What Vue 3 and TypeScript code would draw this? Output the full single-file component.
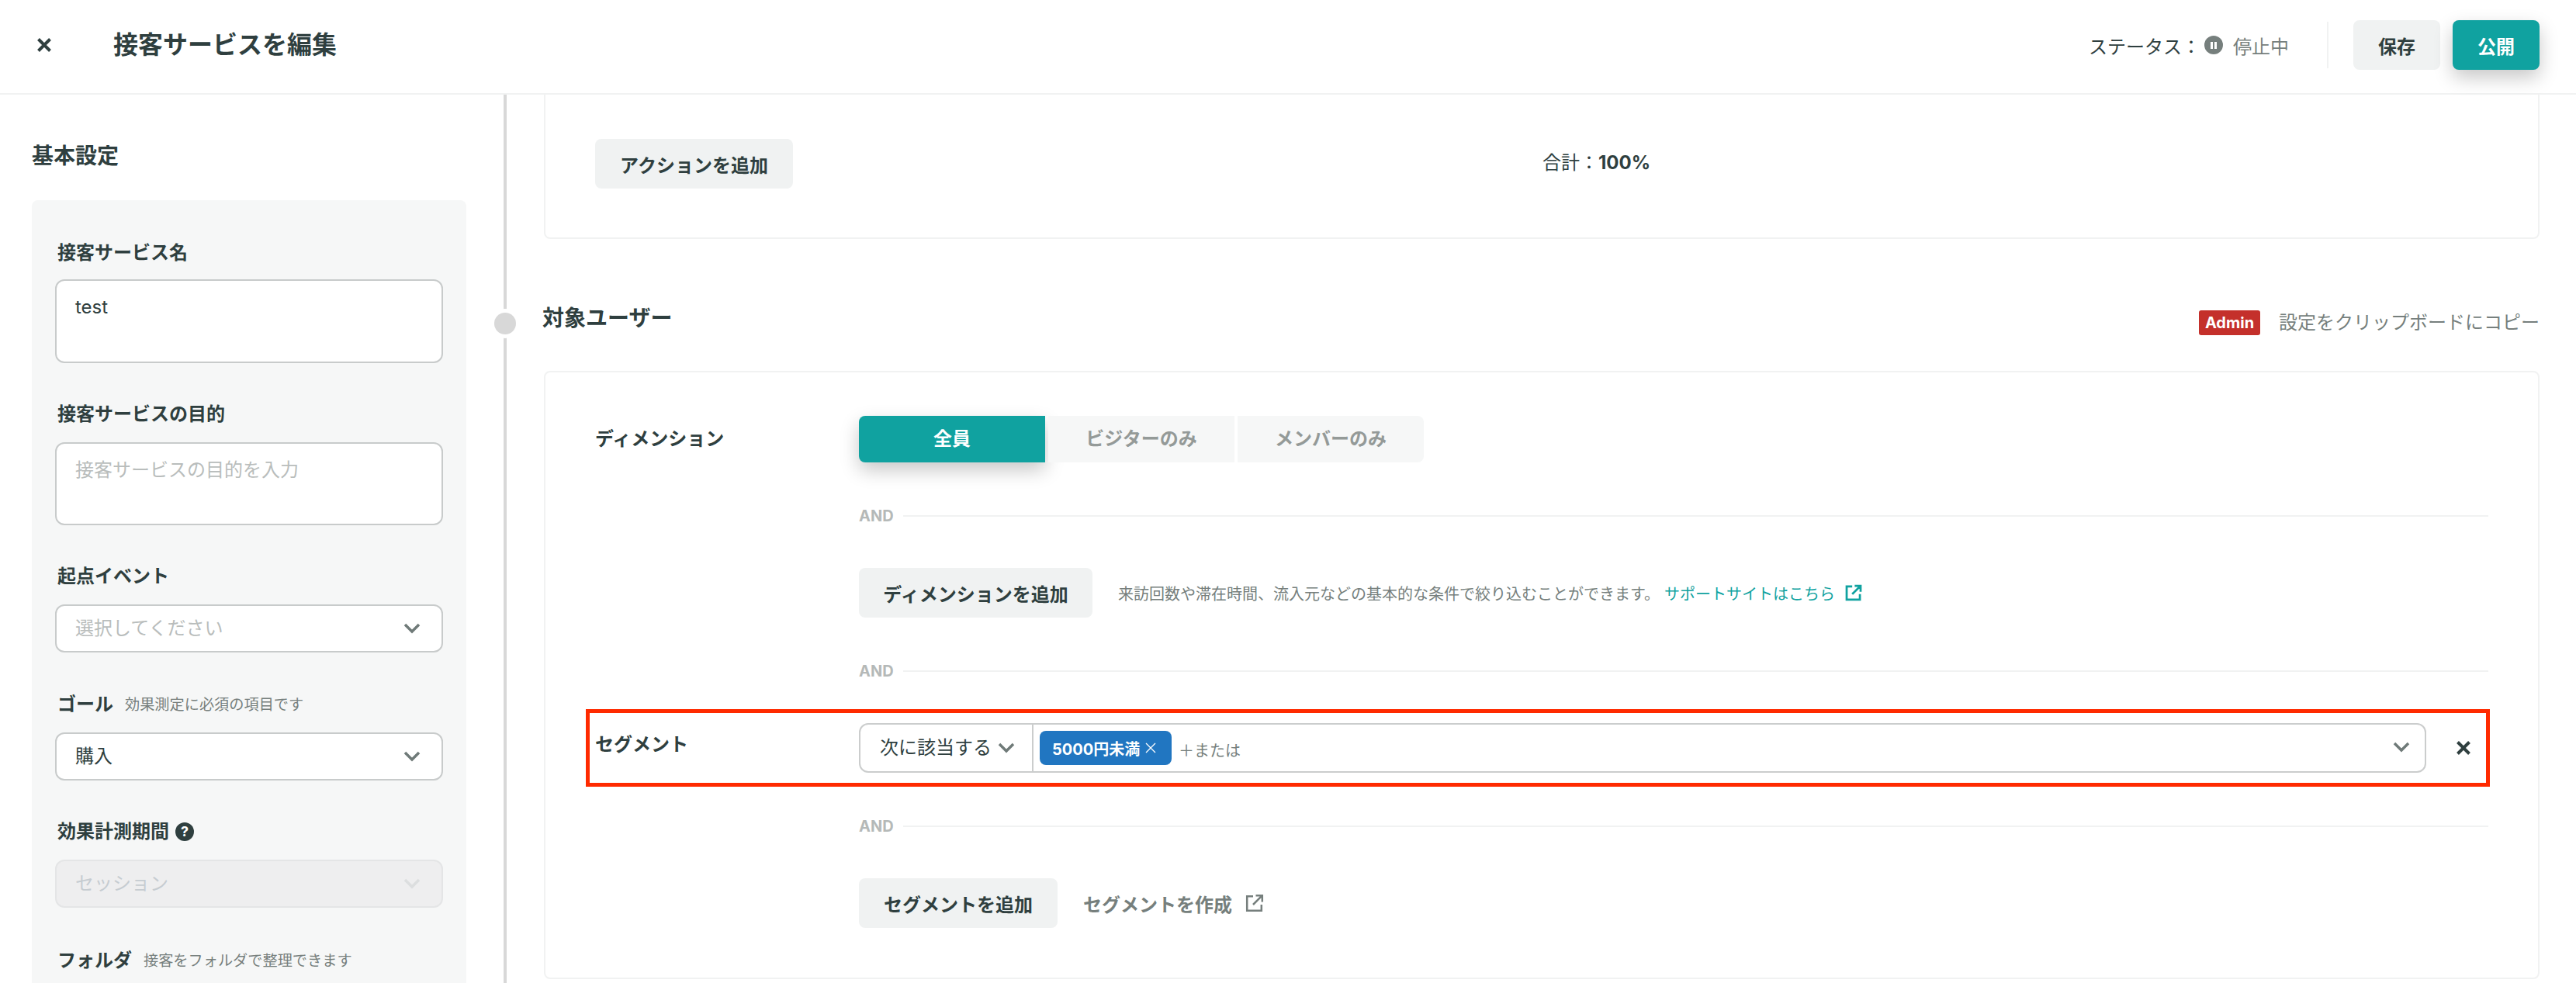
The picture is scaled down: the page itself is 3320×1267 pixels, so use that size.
<script setup lang="ts">
const tabs: { label: string; active?: boolean }[] = [
  { label: '全員', active: true },
  { label: 'ビジターのみ' },
  { label: 'メンバーのみ' },
]
</script>

<template>
  <div class="page">
    <header class="header">
      <svg class="close-top" viewBox="0 0 18 18"><path d="M1.500 1.500l15 15M16.500 1.500l-15 15" /></svg>
      <h1 class="page-title">接客サービスを編集</h1>
      <div class="header-right">
        <span class="status-label">ステータス：</span>
        <span class="pause"><i></i><i></i></span>
        <span class="status-value">停止中</span>
        <span class="header-divider"></span>
        <button class="btn save">保存</button>
        <button class="btn publish">公開</button>
      </div>
    </header>

    <div class="body">
      <aside class="sidebar">
        <h2 class="side-title">基本設定</h2>
        <div class="panel">
          <div class="field">
            <div class="label">接客サービス名</div>
            <div class="control area">test</div>
          </div>
          <div class="field">
            <div class="label">接客サービスの目的</div>
            <div class="control area placeholder">接客サービスの目的を入力</div>
          </div>
          <div class="field">
            <div class="label">起点イベント</div>
            <div class="control select placeholder">
              選択してください
              <svg class="chev" viewBox="0 0 22 14"><path d="M2 2l9 9 9-9" /></svg>
            </div>
          </div>
          <div class="field">
            <div class="label">ゴール<span class="sub">効果測定に必須の項目です</span></div>
            <div class="control select">
              購入
              <svg class="chev" viewBox="0 0 22 14"><path d="M2 2l9 9 9-9" /></svg>
            </div>
          </div>
          <div class="field">
            <div class="label">効果計測期間<span class="help">?</span></div>
            <div class="control select disabled">
              セッション
              <svg class="chev" viewBox="0 0 22 14"><path d="M2 2l9 9 9-9" /></svg>
            </div>
          </div>
          <div class="field">
            <div class="label">フォルダ<span class="sub">接客をフォルダで整理できます</span></div>
            <div class="control select"></div>
          </div>
        </div>
      </aside>

      <main class="main">
        <section class="card top-card">
          <button class="btn add action-btn">アクションを追加</button>
          <div class="total">合計：<b>100%</b></div>
        </section>

        <div class="section-head">
          <span class="dot"></span>
          <h2 class="section-title">対象ユーザー</h2>
          <div class="copy">
            <span class="admin">Admin</span>
            <span>設定をクリップボードにコピー</span>
          </div>
        </div>

        <section class="card target-card">
          <div class="row">
            <div class="row-label">ディメンション</div>
            <div class="tabs">
              <div v-for="t in tabs" :key="t.label" class="tab" :class="{ active: t.active }">{{ t.label }}</div>
            </div>
          </div>

          <div class="and and-1"><span>AND</span></div>

          <div class="row add-row">
            <button class="btn add dim-btn">ディメンションを追加</button>
            <span class="hint">来訪回数や滞在時間、流入元などの基本的な条件で絞り込むことができます。</span>
            <a class="link">サポートサイトはこちら
              <svg class="ext ext-small" viewBox="0 0 24 24"><path d="M10 3.200H2.200v18.600h18.600V14M13.500 2.200h8.300v8.300M21.800 2.200L10 14" /></svg>
            </a>
          </div>

          <div class="and and-2"><span>AND</span></div>

          <div class="segment-row">
            <div class="segment-label">セグメント</div>
            <div class="multi">
              <div class="multi-mode">
                次に該当する
                <svg class="chev mode-chev" viewBox="0 0 22 14"><path d="M2 2l9 9 9-9" /></svg>
              </div>
              <div class="multi-values">
                <span class="tag">5000円未満<svg class="tag-x" viewBox="0 0 14 14"><path d="M1 1l12 12M13 1L1 13" /></svg></span>
                <span class="or">＋または</span>
              </div>
              <svg class="chev multi-chev" viewBox="0 0 22 14"><path d="M2 2l9 9 9-9" /></svg>
            </div>
            <svg class="close-row" viewBox="0 0 18 18"><path d="M1.500 1.500l15 15M16.500 1.500l-15 15" /></svg>
          </div>

          <div class="and and-3"><span>AND</span></div>

          <div class="row add-row">
            <button class="btn add seg-btn">セグメントを追加</button>
            <a class="create">セグメントを作成
              <svg class="ext" viewBox="0 0 24 24"><path d="M10 3.200H2.200v18.600h18.600V14M13.500 2.200h8.300v8.300M21.800 2.200L10 14" /></svg>
            </a>
          </div>
        </section>
      </main>
    </div>
  </div>
</template>

<style>
html, body { margin: 0; background: #fff; }
</style>

<style scoped>
.page {
  width: 3320px;
  height: 1267px;
  overflow: hidden;
  display: flex;
  flex-direction: column;
  background: #fff;
  color: #2f3f3f;
  font-family: Inter, "Noto Sans CJK JP", sans-serif;
  font-size: 24px;
}
h1, h2 { margin: 0; }
button { font-family: inherit; border: 0; cursor: pointer; }

.header {
  height: 116px;
  padding-bottom: 4px;
  flex: none;
  display: flex;
  align-items: center;
  border-bottom: 2px solid #f1f2f2;
  box-sizing: content-box;
}
.close-top { width: 18px; height: 18px; margin-left: 48px; fill: none; stroke: #2f3f3f; stroke-width: 4; }
.page-title { margin-left: 80px; font-size: 32px; font-weight: 700; line-height: 40px; }
.header-right { margin-left: auto; margin-right: 47px; display: flex; align-items: center; }
.status-label { font-size: 24px; width: 149px; white-space: nowrap; }
.pause {
  width: 24px; height: 24px; border-radius: 50%; background: #767f7d;
  display: flex; align-items: center; justify-content: center; gap: 2px;
}
.pause i { width: 3px; height: 9px; background: #fff; }
.status-value { margin-left: 13px; color: #767f7d; }
.header-divider { width: 2px; height: 60px; background: #f1f2f2; margin: 0 32px 0 49px; }

.btn { height: 64px; border-radius: 8px; font-size: 24px; font-weight: 700; color: #2f3f3f; background: #f0f2f2; padding: 0; }
.save { width: 112px; }
.publish { width: 112px; margin-left: 16px; background: #10a2a0; color: #fff; box-shadow: 0 10px 24px rgba(0, 0, 0, 0.22); }

.body { flex: 1; display: flex; min-height: 0; }
.sidebar { width: 649px; flex: none; box-sizing: border-box; padding: 0 48px 0 41px; }
.side-title { font-size: 28px; font-weight: 700; line-height: 40px; margin-top: 59px; }
.panel { margin-top: 37px; background: #f6f7f7; border-radius: 8px; padding: 48px 30px; }
.field { margin-bottom: 48px; }
.field:nth-child(3) { margin-bottom: 49px; }
.field:nth-child(5) { margin-bottom: 50px; }
.label { font-size: 24px; font-weight: 700; line-height: 36px; margin-bottom: 18px; padding-left: 3px; display: flex; align-items: center; white-space: nowrap; }
.field:first-child .label { padding-top: 2px; margin-bottom: 16px; }
.sub { font-size: 19.2px; font-weight: 400; color: #767f7d; margin-left: 15px; }
.help {
  width: 24px; height: 24px; border-radius: 50%; background: #2f3f3f; color: #fff;
  margin-left: 8px; font-size: 18px; font-weight: 700; line-height: 24px; text-align: center;
}
.control {
  position: relative; box-sizing: border-box; background: #fff;
  border: 2px solid #c8cbcb; border-radius: 12px; padding: 0 24px;
  font-size: 24px; line-height: 58px; height: 62px;
}
.area { height: 108px; line-height: 30px; padding-top: 19px; }
.field:nth-child(2) .area { height: 107px; }
.placeholder { color: #b9bdbc; }
.disabled { background: #eeeeef; border-color: #e4e5e6; color: #c6ccd1; }
.chev { width: 22px; height: 14px; fill: none; stroke: #6f7a78; stroke-width: 3.5; }
.select .chev { position: absolute; right: 27px; top: 22px; }
.disabled .chev { stroke: #dcdedf; }

.main { flex: 1; min-width: 0; border-left: 4px solid #d8d8d8; box-sizing: border-box; padding: 0 47px 0 48px; }
.card { border: 2px solid #f1f2f2; border-radius: 8px; box-sizing: border-box; }
.top-card {
  border-top: 0; border-top-left-radius: 0; border-top-right-radius: 0;
  height: 186px; padding: 57px 64px 0; display: flex; align-items: flex-start; position: relative;
}
.action-btn { width: 255px; }
.total { position: absolute; left: 1285px; top: 72px; line-height: 32px; }
.total b { font-weight: 700; }

.section-head { position: relative; height: 170px; display: flex; align-items: flex-start; }
.dot {
  position: absolute; left: -64px; top: 95px; width: 28px; height: 28px; border-radius: 50%;
  background: #d8d8d8; box-shadow: 0 0 0 5px #fff;
}
.section-title { font-size: 28px; font-weight: 700; line-height: 40px; margin: 82px 0 0 -2px; }
.copy { margin-left: auto; margin-top: 92px; display: flex; align-items: center; gap: 24px; color: #767f7d; line-height: 32px; height: 32px; }
.admin {
  width: 79px; height: 32px; border-radius: 3px; background: #c4302b; color: #fff;
  font-size: 20px; font-weight: 700; text-align: center; line-height: 32px;
}

.target-card { padding: 56px 64px 64px; height: 784px; }
.row { display: flex; }
.row-label { width: 340px; flex: none; font-weight: 700; line-height: 60px; }
.tabs { display: flex; gap: 4px; }
.tab {
  width: 240px; height: 60px; line-height: 60px; text-align: center;
  background: #f6f7f7; color: #949a98; font-weight: 700;
}
.tab:first-child { border-radius: 8px 0 0 8px; }
.tab:last-child { border-radius: 0 8px 8px 0; }
.tab.active { background: #10a2a0; color: #fff; box-shadow: 0 10px 24px rgba(0, 0, 0, 0.22); }

.and {
  margin-left: 340px; display: flex; align-items: center; gap: 12px;
  height: 24px; font-size: 20px; font-weight: 700; color: #b5b9b8; line-height: 24px;
}
.and::after { content: ""; flex: 1; height: 2px; background: #f1f2f2; }
.and-1 { margin-top: 57px; margin-bottom: 55px; }
.and-2 { margin-top: 57px; margin-bottom: 37px; }
.and-3 { margin-top: 39px; margin-bottom: 55px; }

.add-row { padding-left: 340px; align-items: center; }
.dim-btn { width: 301px; }
.seg-btn { width: 256px; }
.hint { margin-left: 33px; font-size: 20px; color: #767f7d; white-space: nowrap; }
.link { margin-left: 6px; font-size: 20px; font-weight: 400; color: #10a2a0; display: flex; align-items: center; white-space: nowrap; }
.create { margin-left: 33px; color: #767f7d; font-weight: 700; display: flex; align-items: center; }
.ext { width: 24px; height: 24px; margin-left: 17px; fill: none; stroke: #767f7d; stroke-width: 2.5; }
.ext-small { width: 22px; height: 22px; margin-left: 13px; stroke: #10a2a0; stroke-width: 3; }

.segment-row {
  margin: 0 -2px 0 -12px; height: 100px; box-sizing: border-box;
  border: 5px solid #ff2a00; display: flex; align-items: center; padding-left: 7px;
}
.segment-label { width: 340px; flex: none; font-weight: 700; line-height: 36px; margin-top: -8px; }
.multi {
  flex: none; width: 2020px; height: 64px; box-sizing: border-box; position: relative;
  border: 2px solid #cbcdcd; border-radius: 12px; display: flex; align-items: stretch;
}
.multi-mode {
  width: 223px; box-sizing: border-box; padding-left: 25px; border-right: 2px solid #cbcdcd;
  display: flex; align-items: center; line-height: 1; white-space: nowrap;
}
.mode-chev { margin-left: 8px; }
.multi-values { display: flex; align-items: center; padding-left: 8px; flex: 1; }
.tag {
  height: 44px; width: 170px; box-sizing: border-box; border-radius: 8px; background: #2176c1; color: #fff;
  font-size: 20px; font-weight: 700; padding-left: 16px; display: flex; align-items: center; white-space: nowrap;
}
.tag-x { width: 14px; height: 14px; margin-left: 7px; fill: none; stroke: #fff; stroke-width: 1.3; }
.or { margin-left: 9px; font-size: 20px; color: #767f7d; margin-top: 4px; }
.multi-chev { position: absolute; right: 19px; top: 22px; }
.close-row { width: 18px; height: 18px; margin-left: 39px; fill: none; stroke: #2f3f3f; stroke-width: 4; }
</style>
